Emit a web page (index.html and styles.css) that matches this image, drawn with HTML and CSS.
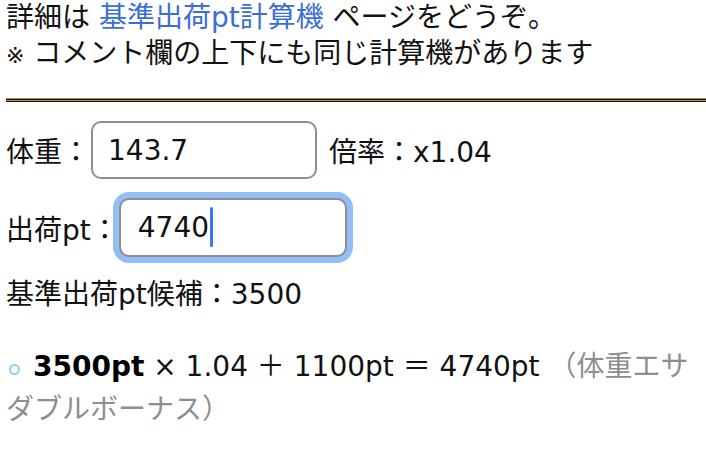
FILE: index.html
```html
<!DOCTYPE html>
<html lang="ja">
<head>
<meta charset="utf-8">
<link rel="stylesheet" href="styles.css">
</head>
<body>
<p class="intro">詳細は <a class="link" href="#">基準出荷pt計算機</a> ページをどうぞ。<br><span class="mark">※</span> コメント欄の上下にも同じ計算機があります</p>
<div class="sep"></div>
<div class="row row-weight">
  <label class="label label-weight" for="w">体重：</label>
  <input class="field field-weight" id="w" type="text" value="143.7">
  <span class="rate">倍率：x1.04</span>
</div>
<div class="row row-pt">
  <label class="label label-pt" for="p">出荷pt：</label>
  <span class="field-wrap">
    <input class="field field-pt focused" id="p" type="text" value="4740">
    <span class="caret"></span>
  </span>
</div>
<p class="candidate">基準出荷pt候補：3500</p>
<p class="result"><span class="bullet"></span><b class="base">3500pt</b> × 1.04 ＋ 1100pt ＝ 4740pt <span class="note">（体重エサダブルボーナス）</span></p>
</body>
</html>
```
FILE: styles.css
```css
html, body {
  margin: 0;
  padding: 0;
  background: #ffffff;
}
body {
  padding: 0 6px;
  font-family: "DejaVu Sans", "Noto Sans CJK JP", sans-serif;
  font-size: 28px;
  color: #111111;
}
.intro {
  margin: 0;
  line-height: 36px;
}
.mark {
  font-size: 22px;
  line-height: 0;
}
.link {
  color: #3a6ed4;
  text-decoration: none;
}
.sep {
  margin: 26px -6px 0 0;
  height: 4px;
  background: linear-gradient(to bottom, #b08858 0, #b08858 1px, #1e1408 1px, #1e1408 2px, #b08858 2px, #b08858 3px, #1e1408 3px, #1e1408 4px);
}
.row {
  display: flex;
  align-items: center;
  margin-top: 19px;
}
.label {
  white-space: nowrap;
}
.label-weight {
  margin-right: 1px;
}
.label-pt {
  margin-right: 0;
}
.field {
  box-sizing: border-box;
  font-family: "DejaVu Sans", "Noto Sans CJK JP", sans-serif;
  font-size: 28px;
  color: #111111;
  border: 2px solid #8e8e8e;
  border-radius: 10px;
  padding: 0 15px;
  background: #ffffff;
  outline: none;
  margin: 0;
}
.field-weight {
  width: 226px;
  height: 58px;
}
.rate {
  margin-left: 12px;
  white-space: nowrap;
}
.field-wrap {
  position: relative;
  display: inline-block;
}
.field-pt {
  width: 228px;
  height: 59px;
  padding-left: 17px;
  display: block;
}
.focused {
  box-shadow: 0 0 0 6px #92bdf6;
}
.caret {
  position: absolute;
  left: 91px;
  top: 9px;
  width: 3px;
  height: 40px;
  border-radius: 2px;
  background: #3478f6;
}
.candidate {
  margin: 20px 0 0 0;
  line-height: 36px;
}
.result {
  margin: 32px 0 0 0;
  line-height: 43px;
}
.bullet {
  display: inline-block;
  box-sizing: border-box;
  width: 11px;
  height: 11px;
  border: 2px solid #95cff0;
  border-radius: 50%;
  margin: 0 13px 0 3px;
  vertical-align: 1px;
}
.base {
  font-weight: bold;
  color: #000000;
}
.note {
  color: #8e8e8e;
}
```
